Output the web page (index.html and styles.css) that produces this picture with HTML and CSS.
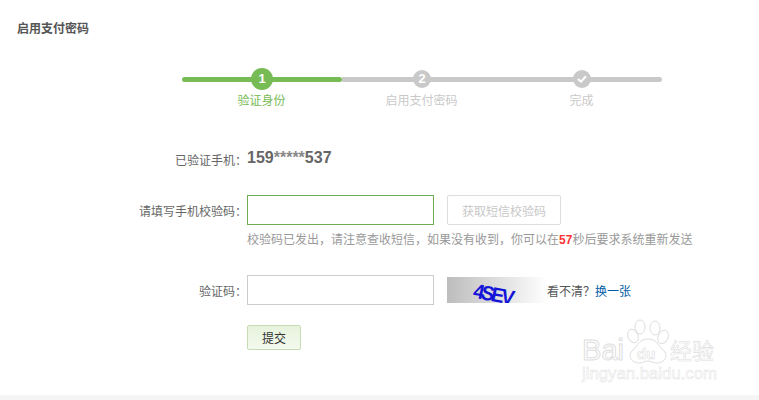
FILE: index.html
```html
<!DOCTYPE html>
<html lang="en">
<head>
  <meta charset="UTF-8">
  <title>启用支付密码</title>
  <link rel="stylesheet" href="styles.css">
</head>
<body>
  <div class="page">
    <h2 class="title">启用支付密码</h2>

    <div class="steps">
      <div class="step done">
        <div class="dot">1</div>
        <div class="step-name">验证身份</div>
      </div>
      <div class="step">
        <div class="dot">2</div>
        <div class="step-name">启用支付密码</div>
      </div>
      <div class="step">
        <div class="dot">
          <svg width="10" height="8" viewBox="0 0 10 8"><path d="M1 4l3 2.6L9 1.2" fill="none" stroke="#fff" stroke-width="2"/></svg>
        </div>
        <div class="step-name">完成</div>
      </div>
    </div>

    <form class="form">
      <div class="row phone-row">
        <label class="label">已验证手机：</label>
        <div class="phone">159<span class="stars">*****</span>537</div>
      </div>

      <div class="row code-row">
        <label class="label">请填写手机校验码：</label>
        <input class="input active" type="text">
        <button type="button" class="sms-btn">获取短信校验码</button>
      </div>
      <p class="hint">校验码已发出，请注意查收短信，如果没有收到，你可以在<b class="count">57</b>秒后要求系统重新发送</p>

      <div class="row captcha-row">
        <label class="label">验证码：</label>
        <input class="input" type="text">
        <div class="captcha"><span class="captcha-text">4SEV</span></div>
        <span class="refresh">看不清？<a href="#">换一张</a></span>
      </div>

      <button type="button" class="submit">提交</button>
    </form>
  </div>

  <div class="watermark">
    <svg width="140" height="70" viewBox="0 0 140 70">
      <g fill="none" stroke="#dedede" stroke-width="1">
        <ellipse cx="53" cy="20" rx="5" ry="7" transform="rotate(-25 53 20)"/>
        <ellipse cx="60" cy="11" rx="5" ry="7"/>
        <ellipse cx="75" cy="12" rx="5" ry="7"/>
        <ellipse cx="83" cy="21" rx="5" ry="7" transform="rotate(25 83 21)"/>
        <path d="M68 23c8 0 10 6 15 11 6 5 2 13-6 13-4 0-6-2-9-2s-5 2-9 2c-8 0-12-8-6-13 5-5 7-11 15-11z"/>
      </g>
      <text class="wm-latin" x="2" y="44" textLength="42" lengthAdjust="spacingAndGlyphs">Bai</text>
      <text class="wm-du" x="57" y="43">du</text>
      <text class="wm-cn" x="90" y="43">经验</text>
      <text class="wm-url" x="2" y="63" textLength="135" lengthAdjust="spacingAndGlyphs">jingyan.baidu.com</text>
    </svg>
  </div>

  <div class="footer-strip"></div>
</body>
</html>
```

FILE: styles.css
```css
* {
  margin: 0;
  padding: 0;
  box-sizing: border-box;
}

html, body {
  height: 400px;
  overflow: hidden;
}

body {
  position: relative;
  font-family: "Liberation Sans", "Noto Sans CJK SC", sans-serif;
  font-size: 12px;
  color: #666;
  background: #fff;
}

.page {
  padding: 22px 17px 0;
}

.title {
  font-size: 12px;
  line-height: 15px;
  font-weight: bold;
  color: #555;
}

.steps {
  display: flex;
  width: 480px;
  margin: 32px 0 0 165px;
  height: 50px;
}

.step {
  width: 160px;
  position: relative;
  display: flex;
  flex-direction: column;
  align-items: center;
  color: #c9c9c9;
}

.step::before {
  content: "";
  position: absolute;
  left: 0;
  right: 0;
  top: 8px;
  height: 5px;
  background: #c9c9c9;
}

.step:last-child::before {
  border-radius: 0 3px 3px 0;
}

.step.done {
  color: #77bb55;
}

.step.done::before {
  background: #77bb55;
  border-radius: 3px;
  z-index: 1;
}

.dot {
  position: relative;
  z-index: 2;
  width: 18px;
  height: 18px;
  margin-top: 1px;
  border-radius: 50%;
  background: #c9c9c9;
  color: #fff;
  font-size: 13px;
  font-weight: bold;
  line-height: 18px;
  text-align: center;
}

.dot svg {
  display: block;
  margin: 5px auto 0;
}

.step.done .dot {
  width: 22px;
  height: 22px;
  margin-top: -1px;
  margin-bottom: -2px;
  line-height: 22px;
  background: #77bb55;
}

.step-name {
  margin-top: 4px;
  margin-right: 1px;
  line-height: 18px;
}

.form {
  margin-top: 29px;
}

.row {
  display: flex;
  align-items: center;
}

.label {
  width: 230px;
  text-align: right;
  color: #666;
}

.phone-row {
  height: 20px;
}

.phone-row .label {
  padding-top: 3px;
}

.phone {
  font-size: 16px;
  font-weight: bold;
  color: #666;
}

.stars {
  color: #888;
}

.code-row {
  margin-top: 27px;
}

.input {
  width: 187px;
  height: 30px;
  border: 1px solid #ccc;
  background: #fff;
  outline: none;
}

.input.active {
  border-color: #6fad4e;
}

.sms-btn {
  width: 114px;
  height: 30px;
  margin-left: 13px;
  border: 1px solid #ddd;
  border-radius: 2px;
  background: #fff;
  color: #c8c8c8;
  font: inherit;
}

.hint {
  margin: 7px 0 0 230px;
  line-height: 16px;
  color: #999;
}

.count {
  color: #f33;
}

.captcha-row {
  margin-top: 27px;
}

.captcha {
  width: 100px;
  height: 26px;
  margin-left: 13px;
  background: linear-gradient(90deg, #bdbdbd, #f8f8f8 90%, #fff);
  overflow: hidden;
  text-align: center;
}

.captcha-text {
  display: inline-block;
  margin-left: -8px;
  font-size: 20px;
  font-weight: bold;
  line-height: 34px;
  letter-spacing: -3px;
  color: #1414d8;
  transform: skewX(-12deg) skewY(10deg);
}

.refresh {
  color: #555;
}

.refresh a {
  color: #005ea7;
  text-decoration: none;
}

.submit {
  display: block;
  width: 54px;
  height: 25px;
  margin: 20px 0 0 230px;
  border: 1px solid #c5dcb4;
  border-radius: 2px;
  background: linear-gradient(#e6f3dc, #f4faee);
  color: #333;
  font: inherit;
}

.watermark {
  position: absolute;
  left: 580px;
  top: 316px;
}

.wm-latin {
  font: 30px "Liberation Sans", sans-serif;
  fill: #fff;
  stroke: #dedede;
  stroke-width: 1;
}

.wm-du {
  font: bold 15px "Liberation Sans", sans-serif;
  fill: #fff;
  stroke: #dedede;
  stroke-width: 0.6;
}

.wm-cn {
  font: 22px "Noto Sans CJK SC", sans-serif;
  fill: #fff;
  stroke: #dedede;
  stroke-width: 0.6;
}

.wm-url {
  font: 17px "Liberation Sans", sans-serif;
  fill: #fff;
  stroke: #e2e2e2;
  stroke-width: 0.5;
}

.footer-strip {
  position: absolute;
  left: 0;
  right: 0;
  bottom: 0;
  height: 5px;
  background: #f5f5f5;
}
```
